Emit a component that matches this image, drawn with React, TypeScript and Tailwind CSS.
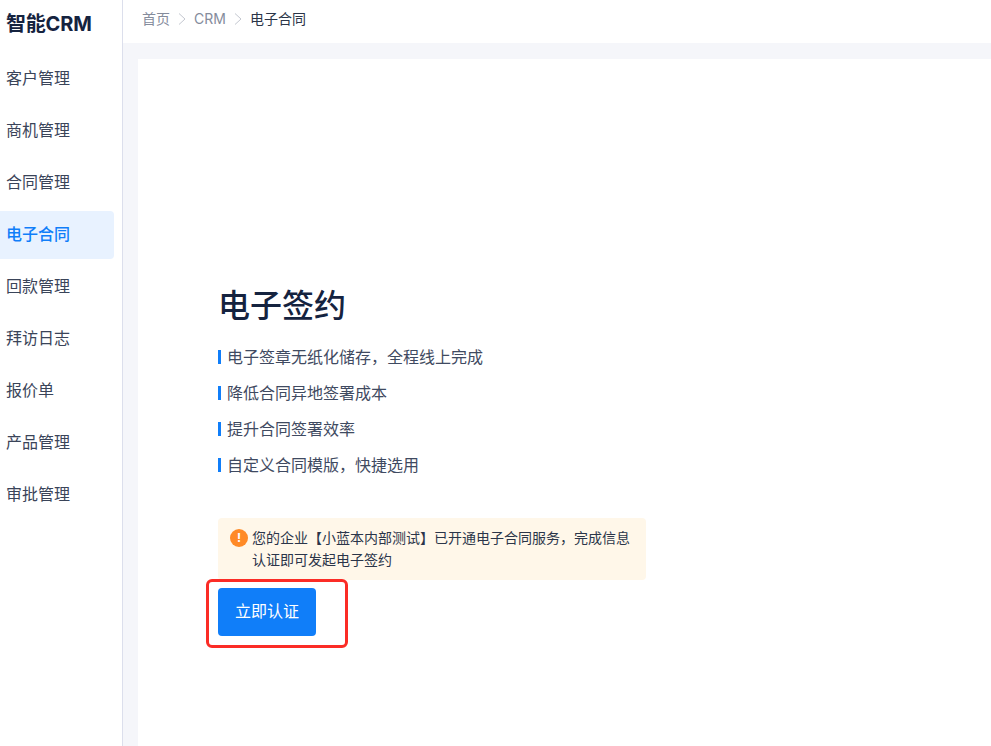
import React from 'react';

const MENU = ['客户管理', '商机管理', '合同管理', '电子合同', '回款管理', '拜访日志', '报价单', '产品管理', '审批管理'];
const FEATURES = ['电子签章无纸化储存，全程线上完成', '降低合同异地签署成本', '提升合同签署效率', '自定义合同模版，快捷选用'];
const FONT = "font-['Inter','Noto_Sans_CJK_SC',sans-serif]";

function Chevron() {
  return (
    <svg width="12" height="12" viewBox="0 0 12 12" fill="none" stroke="#c3c7d0" strokeWidth="1" className="mx-[6px]">
      <path d="M3 .5 9 6l-6 5.5" />
    </svg>
  );
}

export default function App() {
  return (
    <div className={`flex h-[746px] w-[991px] overflow-hidden bg-white ${FONT}`}>
      <aside className="w-[123px] shrink-0 border-r border-[#dcdfec] bg-white">
        <div className="flex h-[47px] items-center pl-[6px] text-[20px] font-bold tracking-[-0.2px] text-[#15233f]">智能CRM</div>
        <nav className="mt-[8px] flex flex-col gap-[4px]">
          {MENU.map(item => (
            <div
              key={item}
              className={
                item === '电子合同'
                  ? 'flex h-[48px] w-[114px] items-center rounded-r-[4px] bg-[#e8f2ff] pb-[2px] pl-[6px] text-[16px] font-medium text-[#107ef9]'
                  : 'flex h-[48px] w-[114px] items-center pb-[2px] pl-[6px] text-[16px] text-[#3a4459]'
              }
            >
              {item}
            </div>
          ))}
        </nav>
      </aside>

      <div className="flex min-w-0 flex-1 flex-col bg-[#f5f6fa]">
        <header className="flex h-[43px] shrink-0 items-center bg-white pb-[6px] pl-[19px] text-[14px] text-[#858c9c]">
          <span>首页</span>
          <Chevron />
          <span>CRM</span>
          <Chevron />
          <span className="text-[#2b3549]">电子合同</span>
        </header>

        <main className="ml-[15px] mt-[16px] flex-1 bg-white pl-[80px] pt-[224px]">
          <h1 className="text-[32px] font-medium leading-[46px] text-[#15233f]">电子签约</h1>
          <ul className="mt-[16px] flex flex-col gap-[12px]">
            {FEATURES.map(text => (
              <li key={text} className="flex h-[24px] items-center text-[16px] text-[#3f4a61]">
                <span className="mr-[6px] h-[14px] w-[3px] bg-[#107ef9]" />
                {text}
              </li>
            ))}
          </ul>

          <div className="mt-[41px] flex h-[62px] w-[428px] rounded-[4px] bg-[#fff7e9] pl-[12px] pt-[9px]">
            <span className="mr-[4px] mt-[2px] flex h-[18px] w-[18px] shrink-0 items-center justify-center rounded-full bg-[#ff8a26] text-[12px] font-bold text-white">!</span>
            <p className="w-[384px] text-[14px] leading-[22px] text-[#2b3549]">您的企业【小蓝本内部测试】已开通电子合同服务，完成信息认证即可发起电子签约</p>
          </div>

          <div className="relative mt-[8px] w-fit">
            <button className="h-[48px] w-[98px] rounded-[4px] bg-[#107ef9] pb-[2px] text-[16px] text-white">立即认证</button>
            <div className="absolute left-[-12px] top-[-9px] h-[69px] w-[142px] rounded-[6px] border-[3px] border-[#fb2c26]" />
          </div>
        </main>
      </div>
    </div>
  );
}
